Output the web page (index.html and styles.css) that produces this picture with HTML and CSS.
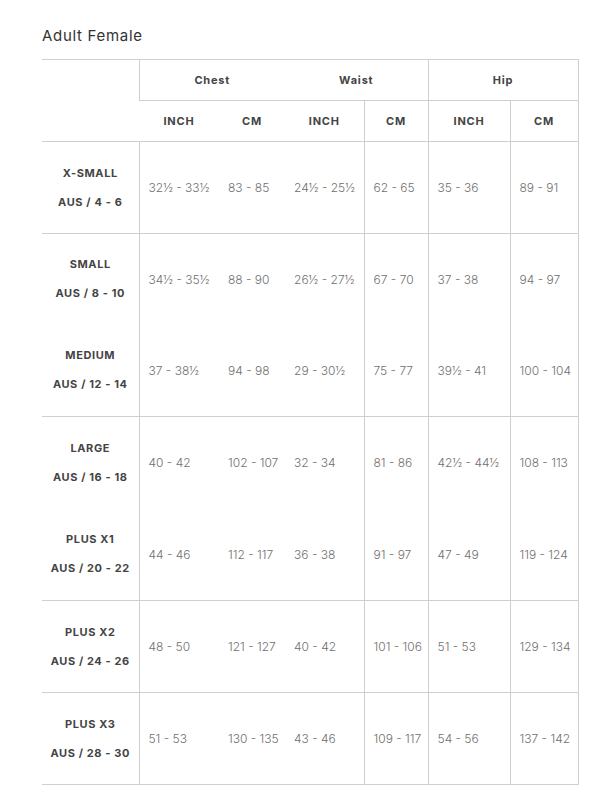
FILE: index.html
```html
<!DOCTYPE html>
<html>
<head>
<meta charset="utf-8">
<title>Size chart</title>
<link rel="stylesheet" href="styles.css">
</head>
<body>
<div class="page">
  <h2 class="title">Adult Female</h2>
  <table class="size-table">
    <colgroup>
      <col class="c-label"><col class="c-ci"><col class="c-cc"><col class="c-wi"><col class="c-wc"><col class="c-hi"><col class="c-hc">
    </colgroup>
    <thead>
      <tr class="h1">
        <th class="corner" rowspan="2"></th>
        <th class="grp bl" colspan="2">Chest</th>
        <th class="grp" colspan="2">Waist</th>
        <th class="grp bl" colspan="2">Hip</th>
      </tr>
      <tr class="h2">
        <th>INCH</th><th>CM</th><th>INCH</th><th class="bl">CM</th><th class="bl">INCH</th><th class="bl">CM</th>
      </tr>
    </thead>
    <tbody>
      <tr class="sep">
        <td class="label"><span>X-SMALL</span><span>AUS / 4 - 6</span></td>
        <td>32½ - 33½</td><td>83 - 85</td><td>24½ - 25½</td><td>62 - 65</td><td>35 - 36</td><td>89 - 91</td>
      </tr>
      <tr class="short">
        <td class="label"><span>SMALL</span><span>AUS / 8 - 10</span></td>
        <td>34½ - 35½</td><td>88 - 90</td><td>26½ - 27½</td><td>67 - 70</td><td>37 - 38</td><td>94 - 97</td>
      </tr>
      <tr class="sep">
        <td class="label"><span>MEDIUM</span><span>AUS / 12 - 14</span></td>
        <td>37 - 38½</td><td>94 - 98</td><td>29 - 30½</td><td>75 - 77</td><td>39½ - 41</td><td>100 - 104</td>
      </tr>
      <tr>
        <td class="label"><span>LARGE</span><span>AUS / 16 - 18</span></td>
        <td>40 - 42</td><td>102 - 107</td><td>32 - 34</td><td>81 - 86</td><td>42½ - 44½</td><td>108 - 113</td>
      </tr>
      <tr class="sep">
        <td class="label"><span>PLUS X1</span><span>AUS / 20 - 22</span></td>
        <td>44 - 46</td><td>112 - 117</td><td>36 - 38</td><td>91 - 97</td><td>47 - 49</td><td>119 - 124</td>
      </tr>
      <tr class="sep">
        <td class="label"><span>PLUS X2</span><span>AUS / 24 - 26</span></td>
        <td>48 - 50</td><td>121 - 127</td><td>40 - 42</td><td>101 - 106</td><td>51 - 53</td><td>129 - 134</td>
      </tr>
      <tr class="sep">
        <td class="label"><span>PLUS X3</span><span>AUS / 28 - 30</span></td>
        <td>51 - 53</td><td>130 - 135</td><td>43 - 46</td><td>109 - 117</td><td>54 - 56</td><td>137 - 142</td>
      </tr>
    </tbody>
  </table>
</div>
</body>
</html>
```

FILE: styles.css
```css
html, body {
  margin: 0;
  padding: 0;
  background: #ffffff;
}

body {
  font-family: "Inter", "Noto Sans", "DejaVu Sans", sans-serif;
  color: #333333;
}

.page {
  padding: 26px 0 0 42px;
}

.title {
  margin: 0 0 13px 0;
  font-size: 15px;
  line-height: 20px;
  font-weight: 400;
  color: #333333;
  letter-spacing: 0.7px;
}

.size-table {
  table-layout: fixed;
  width: 536px;
  border-collapse: collapse;
  border-top: 1px solid #cfcfcf;
  border-right: 1px solid #cfcfcf;
}

.c-label { width: 97px; }
.c-ci { width: 80px; }
.c-cc { width: 66px; }
.c-wi { width: 79px; }
.c-wc { width: 64px; }
.c-hi { width: 82px; }
.c-hc { width: 68px; }

.size-table th {
  padding: 0;
  font-size: 11px;
  font-weight: 700;
  color: #444444;
  text-align: center;
  letter-spacing: 0.8px;
}

.h1 { height: 41px; }
.h2 { height: 41px; border-bottom: 1px solid #cfcfcf; }

.grp { border-bottom: 1px solid #cfcfcf; }
.bl { border-left: 1px solid #cfcfcf; }

.corner { border-bottom: 1px solid #cfcfcf; }

.size-table tbody tr { height: 92px; }
.size-table tbody tr.short { height: 91px; }
.size-table tbody tr.sep { border-bottom: 1px solid #cfcfcf; }

.size-table td {
  padding: 0 0 0 9px;
  font-size: 12px;
  font-weight: 300;
  color: #707070;
  text-align: left;
  white-space: nowrap;
}

.size-table td:nth-child(5),
.size-table td:nth-child(6),
.size-table td:nth-child(7) {
  border-left: 1px solid #cfcfcf;
}

.size-table td.label {
  padding: 0;
  border-right: 1px solid #cfcfcf;
  text-align: center;
}

.label span {
  display: block;
  font-size: 11px;
  font-weight: 700;
  color: #444444;
  line-height: 29px;
  letter-spacing: 0.6px;
}
```
